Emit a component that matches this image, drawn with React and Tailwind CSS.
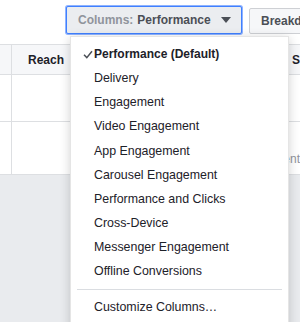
import React from "react";

const items = [
  "Performance (Default)",
  "Delivery",
  "Engagement",
  "Video Engagement",
  "App Engagement",
  "Carousel Engagement",
  "Performance and Clicks",
  "Cross-Device",
  "Messenger Engagement",
  "Offline Conversions",
];

const Check = () => (
  <svg width="10" height="9" viewBox="0 0 10 9" className="absolute left-[12px] top-[8px]">
    <path d="M1 4.8 L3.8 7.6 L9 1.2" fill="none" stroke="#4b4f56" strokeWidth="1.5" />
  </svg>
);

const App = () => {
  return (
    <div className="relative w-[300px] h-[322px] overflow-hidden bg-[#e9ebee] font-['Liberation_Sans',Arial,sans-serif] text-[#1d2129]">
      {/* toolbar */}
      <div className="h-[44px] bg-white flex items-start pl-[66px] pt-[6px] gap-[7px] overflow-hidden">
        <button className="shrink-0 w-[176px] h-[28px] flex items-center pl-[11px] pr-[10px] bg-[#ebedf0] border border-[#4080ff] rounded-[2px] ring-1 ring-[#8fb3ff] text-[12px] font-bold">
          <span className="text-[#90949c]">Columns:</span>
          <span className="ml-[4px] text-[#4b4f56]">Performance</span>
          <svg width="10" height="6" viewBox="0 0 10 6" className="ml-auto">
            <path d="M0 0 H10 L5 6 Z" fill="#4b4f56" />
          </svg>
        </button>
        <button className="shrink-0 mt-[2px] h-[26px] flex items-center pl-[11px] pr-3 bg-[#f6f7f9] border border-[#ced0d4] rounded-[2px] text-[12px] font-bold text-[#4b4f56] whitespace-nowrap">
          Breakdown
        </button>
      </div>

      {/* table */}
      <div className="bg-white border-t border-[#dddfe2]">
        <div className="flex h-[30px] bg-[#f6f7f9] border-b border-[#dddfe2] text-[12px] font-bold">
          <div className="w-[12px] border-r border-[#dddfe2]" />
          <div className="w-[60px] border-r border-[#dddfe2] flex items-center justify-end pr-[7px]">Reach</div>
          <div className="flex-1 border-r border-[#dddfe2]" />
          <div className="w-[16px] overflow-hidden flex items-center pl-[8px] whitespace-nowrap">Spend</div>
        </div>
        <div className="flex h-[47px] border-b border-[#dddfe2]">
          <div className="w-[12px] border-r border-[#dddfe2]" />
          <div className="w-[60px] border-r border-[#dddfe2]" />
          <div className="flex-1 border-r border-[#dddfe2]" />
          <div className="w-[16px]" />
        </div>
        <div className="flex h-[53px] border-b border-[#dddfe2] text-[12px] text-[#90949c]">
          <div className="w-[12px] border-r border-[#dddfe2]" />
          <div className="w-[60px] border-r border-[#dddfe2]" />
          <div className="flex-1 border-r border-[#dddfe2]" />
          <div className="w-[16px] overflow-hidden flex justify-end items-start pt-[28px] whitespace-nowrap">Engagement</div>
        </div>
      </div>

      {/* columns menu */}
      <div className="absolute left-[70px] top-[36px] w-[219px] h-[300px] bg-white border border-black/10 shadow-[0_2px_10px_rgba(0,0,0,0.18)] pt-[5px]">
        {items.map((item, i) => (
          <div
            key={item}
            className={`relative h-[24.2px] flex items-center pl-[23px] whitespace-nowrap ${
              i === 0 ? "text-[12px] font-bold" : "text-[12.4px]"
            }`}
          >
            {i === 0 && <Check />}
            {item}
          </div>
        ))}
        <div className="mx-[6px] mt-[5px] border-t border-[#dadde1]" />
        <div className="h-[24px] mt-[5px] flex items-center pl-[23px] text-[12.4px]">
          Customize Columns…
        </div>
      </div>
    </div>
  );
};

export default App;
